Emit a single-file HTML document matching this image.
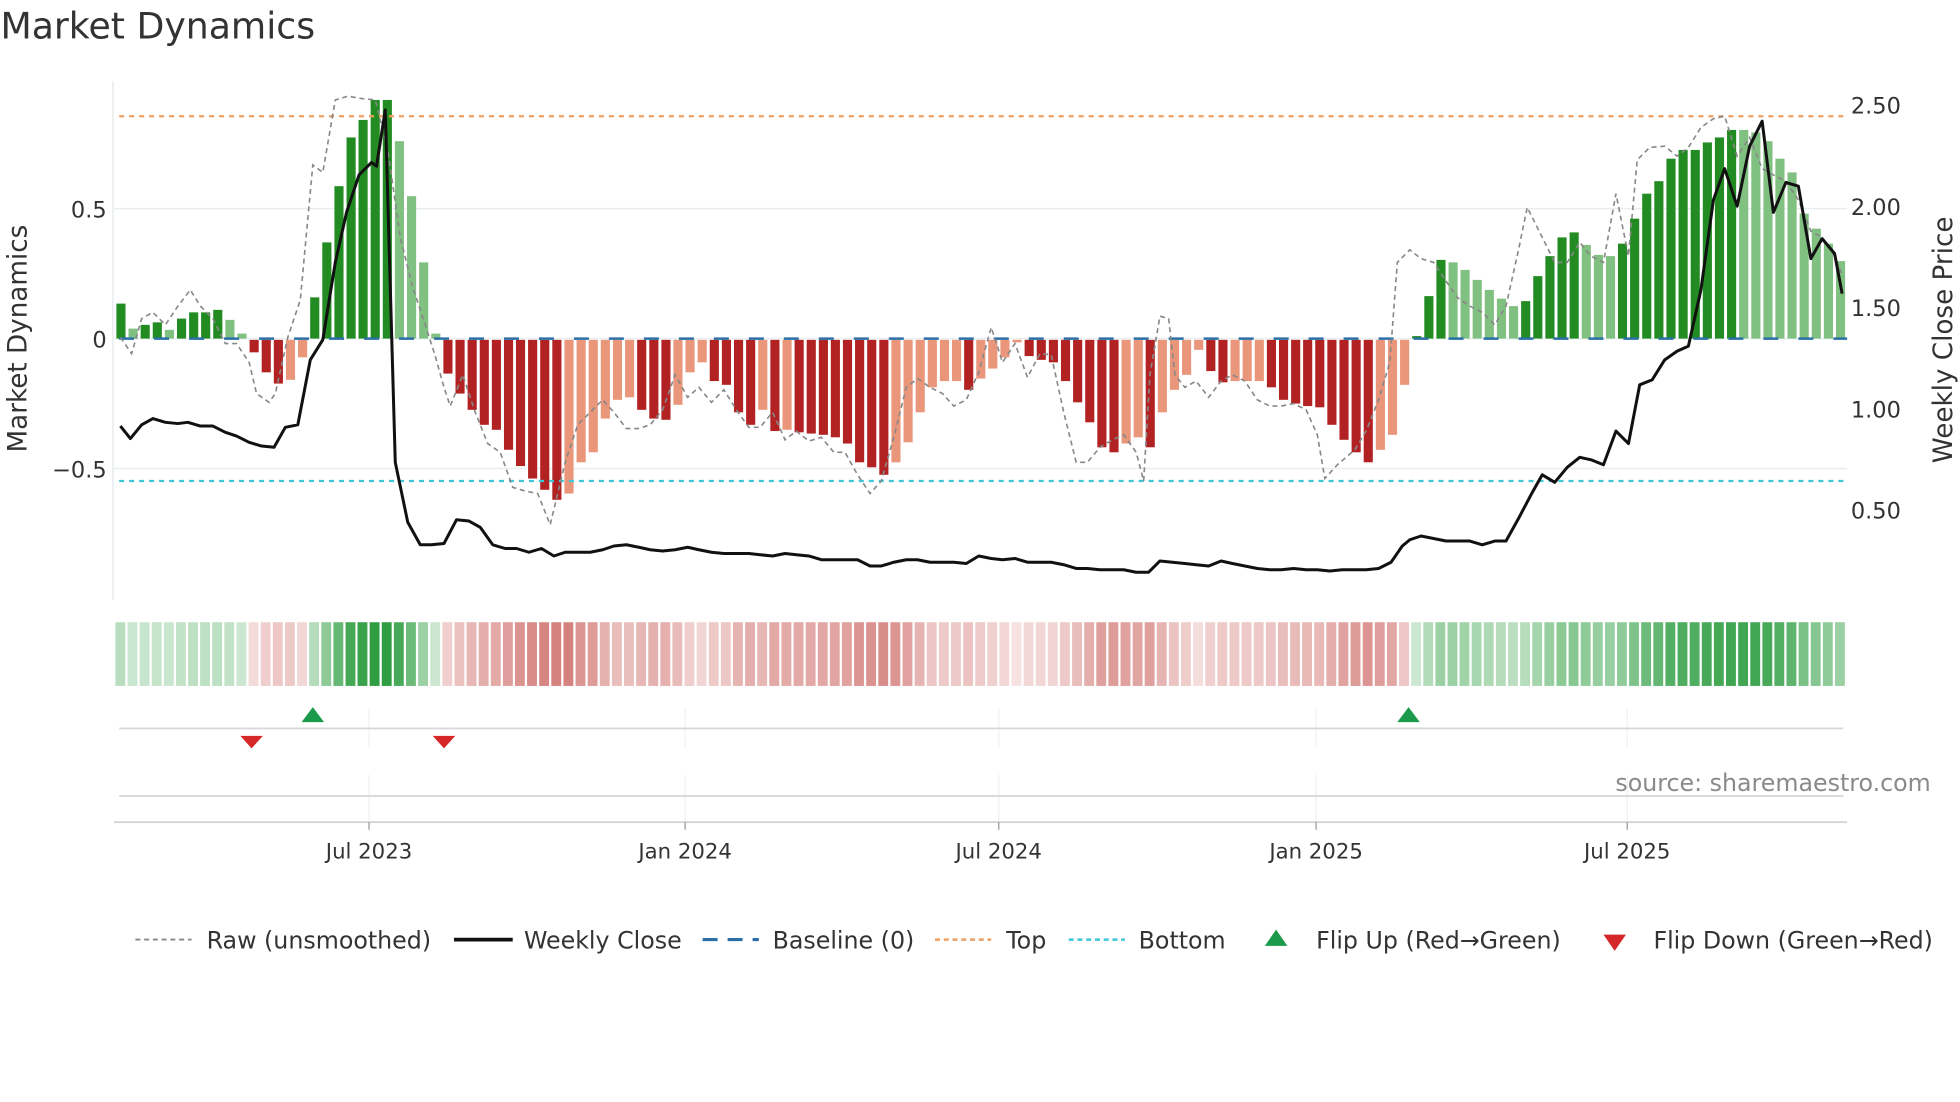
<!DOCTYPE html>
<html><head><meta charset="utf-8"><style>
html,body{margin:0;padding:0;background:#fff;width:1960px;height:1102px;overflow:hidden}
svg{display:block}
text{font-family:"DejaVu Sans","Liberation Sans",sans-serif;fill:#333}
</style></head><body>
<svg id="s" width="1960" height="1102" viewBox="0 0 1568 882" xmlns="http://www.w3.org/2000/svg">
<rect width="1568" height="882" fill="#fff"/>
<text x="0" y="31" font-size="29">Market Dynamics</text>
<g id="g"></g>
<text x="1481" y="91" font-size="18">2.50</text>
<text x="1481" y="172" font-size="18">2.00</text>
<text x="1481" y="253" font-size="18">1.50</text>
<text x="1481" y="334" font-size="18">1.00</text>
<text x="1481" y="415" font-size="18">0.50</text>
<text x="85" y="174" font-size="18" text-anchor="end">0.5</text>
<text x="85" y="278" font-size="18" text-anchor="end">0</text>
<text x="85" y="382" font-size="18" text-anchor="end">−0.5</text>
<text transform="translate(21,271) rotate(-90)" font-size="21" text-anchor="middle">Market Dynamics</text>
<text transform="translate(1562,272) rotate(-90)" font-size="21" text-anchor="middle">Weekly Close Price</text>
<text x="1545" y="633" font-size="19" text-anchor="end" style="fill:#8a8a8a">source: sharemaestro.com</text>
<g font-size="17" text-anchor="middle">
<text x="295" y="687">Jul 2023</text><text x="548" y="687">Jan 2024</text><text x="799" y="687">Jul 2024</text><text x="1053" y="687">Jan 2025</text><text x="1302" y="687">Jul 2025</text>
</g>
<g font-size="19">
<line x1="108" y1="752" x2="153" y2="752" stroke="#888" stroke-width="1.5" stroke-dasharray="4,3"/>
<text x="165" y="759">Raw (unsmoothed)</text>
<line x1="363" y1="752" x2="410" y2="752" stroke="#111" stroke-width="3"/>
<text x="419" y="759">Weekly Close</text>
<line x1="562" y1="752" x2="607" y2="752" stroke="#2a6fa8" stroke-width="2.5" stroke-dasharray="12,8"/>
<text x="618" y="759">Baseline (0)</text>
<line x1="748" y1="752" x2="793" y2="752" stroke="#f0a060" stroke-width="2" stroke-dasharray="4,3"/>
<text x="805" y="759">Top</text>
<line x1="855" y1="752" x2="900" y2="752" stroke="#3cc8d8" stroke-width="2" stroke-dasharray="4,3"/>
<text x="911" y="759">Bottom</text>
<polygon points="1021,744 1030,757 1012,757" fill="#1a9a4a"/>
<text x="1053" y="759">Flip Up (Red→Green)</text>
<polygon points="1283,748 1301,748 1292,761" fill="#d62728"/>
<text x="1323" y="759">Flip Down (Green→Red)</text>
</g>
</svg>
<script>
var g=document.getElementById('g'),h='';
[167,271,375].forEach(function(y){h+='<line x1="91" y1="'+y+'" x2="1478" y2="'+y+'" stroke="#e8eef0" stroke-width="1.2"/>';});
h+='<line x1="90" y1="65" x2="90" y2="480" stroke="#e4e8ea" stroke-width="1"/>';
var B=[[243,1],[263,0],[260,1],[258,1],[264,0],[255,1],[250,1],[250,1],[248,1],[256,0],[267,0],
[282,1],[298,1],[307,1],[304,0],[286,0],
[238,1],[194,1],[149,1],[110,1],[96,1],[80,1],[80,1],[113,0],[157,0],[210,0],[267,0],
[299,1],[315,1],[328,1],[340,1],[344,1],[360,1],[373,1],[383,1],[392,1],[400,1],[395,0],[370,0],[362,0],[335,0],[320,0],[318,0],[328,1],[335,1],[336,1],[324,0],[298,0],[290,0],[305,1],[308,1],
[330,1],[340,1],[328,0],[345,1],[344,0],[346,1],[347,1],[348,1],[350,1],[355,1],[370,1],[374,1],[380,1],[370,0],[354,0],[330,0],[310,0],[305,0],[305,0],[312,1],[303,0],[295,0],[286,0],[274,0],[285,1],[288,1],[290,1],[305,1],[322,1],[338,1],[358,1],[362,1],[355,0],[350,0],[358,1],[330,0],[312,0],[300,0],[280,0],[297,1],[306,1],[305,0],[305,0],[305,0],[310,1],[320,1],[323,1],[325,1],[326,1],[340,1],[352,1],[362,1],[370,1],[360,0],[348,0],[308,0],
[269,1],[237,1],[208,1],[210,0],[216,0],[224,0],[232,0],[239,0],[245,0],[241,1],[221,1],[205,1],[190,1],[186,1],[196,0],[204,0],[205,0],[195,1],[175,1],[155,1],[145,1],[127,1],[120,1],[120,1],[114,1],[110,1],[104,1],[104,0],[106,0],[113,0],[127,0],[138,0],[171,0],[183,0],[195,0],[209,0]];
var n=B.length,x0=92,dx=(1478-x0)/n;
B.forEach(function(b,i){var x=x0+i*dx+0.8,w=dx-2.4,y=b[0],c;
 if(y<=271){c=b[1]?'#228b22':'#80c080';h+='<rect x="'+x.toFixed(1)+'" y="'+y+'" width="'+w.toFixed(1)+'" height="'+(271-y)+'" fill="'+c+'"/>';}
 else{c=b[1]?'#b22222':'#e9967a';h+='<rect x="'+x.toFixed(1)+'" y="272" width="'+w.toFixed(1)+'" height="'+(y-272)+'" fill="'+c+'"/>';}
 var v=(271-y)/208,a;
 if(v>=0){a=0.22+0.75*Math.min(1,v/0.9);c='rgba(40,155,60,'+a.toFixed(2)+')';}
 else{a=0.15+0.55*Math.min(1,-v/0.6);c='rgba(195,75,70,'+a.toFixed(2)+')';}
 h+='<rect x="'+(x0+i*dx).toFixed(1)+'" y="498" width="'+(dx-1.8).toFixed(1)+'" height="51" fill="'+c+'"/>';
});
h+='<line x1="95" y1="271" x2="1478" y2="271" stroke="#2a6fa8" stroke-width="2" stroke-dasharray="12,16"/>';
h+='<line x1="95" y1="93" x2="1478" y2="93" stroke="#f0a060" stroke-width="1.8" stroke-dasharray="4,4"/>';
h+='<line x1="95" y1="385" x2="1478" y2="385" stroke="#3cc8d8" stroke-width="1.8" stroke-dasharray="4,4"/>';
var R="96 270,105 283,113 255,122 250,132 260,142 245,152 232,160 245,170 255,180 275,189 275,199 290,205 315,215 322,220 315,230 270,240 240,250 132,258 138,268 80,278 77,290 79,300 80,310 120,320 190,330 230,340 260,348 285,355 310,360 325,370 300,380 330,390 355,400 362,410 390,420 393,430 395,440 420,452 370,462 340,472 330,482 320,491 330,501 343,511 343,520 340,530 328,540 300,550 318,559 310,569 322,579 312,589 328,599 342,608 342,618 330,628 352,637 345,647 353,657 350,667 362,676 362,686 380,696 395,705 385,715 350,725 310,734 303,744 310,754 315,763 325,773 320,783 298,793 262,802 290,812 275,822 302,832 283,841 284,851 330,861 370,870 370,880 358,890 352,899 348,909 362,915 385,920 300,928 253,935 255,940 300,948 310,957 305,967 318,977 305,986 300,996 305,1006 320,1016 325,1025 325,1035 323,1045 328,1054 348,1060 383,1070 372,1084 360,1093 345,1103 320,1112 290,1118 210,1128 200,1137 207,1147 210,1157 225,1166 238,1176 245,1186 250,1196 260,1205 245,1215 200,1222 166,1234 190,1244 210,1254 210,1264 194,1273 205,1283 210,1293 155,1303 205,1310 128,1320 118,1332 117,1342 125,1351 118,1361 102,1371 95,1380 93,1390 125,1400 110,1410 135,1419 140,1429 145,1439 160,1449 185,1458 190,1468 205,1474 220";
h+='<polyline points="'+R+'" fill="none" stroke="#888" stroke-width="1.3" stroke-dasharray="4,3"/>';
var W="96 341,104 351,113 340,122 335,132 338,142 339,150 338,160 341,170 341,180 346,189 349,199 354,209 357,219 358,228 342,238 340,248 288,258 272,268 210,277 170,287 140,297 130,301 133,308 88,316 370,326 418,336 436,345 436,355 435,365 416,375 417,384 422,394 436,404 439,413 439,423 442,433 439,443 445,452 442,462 442,472 442,482 440,491 437,501 436,511 438,520 440,530 441,540 440,550 438,559 440,569 442,579 443,589 443,599 443,608 444,618 445,628 443,637 444,647 445,657 448,667 448,676 448,686 448,696 453,705 453,715 450,725 448,734 448,744 450,754 450,763 450,773 451,783 445,793 447,802 448,812 447,822 450,832 450,841 450,851 452,861 455,870 455,880 456,890 456,899 456,909 458,919 458,928 449,938 450,948 451,957 452,967 453,977 449,986 451,996 453,1006 455,1016 456,1025 456,1035 455,1045 456,1054 456,1064 457,1074 456,1084 456,1093 456,1103 455,1113 450,1122 437,1128 432,1137 429,1147 431,1157 433,1166 433,1176 433,1186 436,1196 433,1205 433,1215 415,1225 396,1234 380,1244 386,1254 374,1264 366,1273 368,1283 372,1293 345,1303 355,1312 308,1322 304,1332 288,1342 281,1351 277,1361 232,1371 160,1380 135,1390 165,1400 117,1410 97,1419 170,1429 146,1439 149,1449 207,1458 191,1468 203,1474 235";
h+='<polyline points="'+W+'" fill="none" stroke="#111" stroke-width="2.4" stroke-linejoin="round"/>';
[295,548,799,1053,1302].forEach(function(x){h+='<line x1="'+x+'" y1="567" x2="'+x+'" y2="598" stroke="#eef1f3"/><line x1="'+x+'" y1="620" x2="'+x+'" y2="665" stroke="#eef1f3"/>';});
h+='<line x1="95" y1="583" x2="1475" y2="583" stroke="#d6d9db" stroke-width="1.5"/>';
h+='<line x1="95" y1="637" x2="1475" y2="637" stroke="#d6d9db" stroke-width="1.5"/>';
h+='<line x1="91" y1="658" x2="1478" y2="658" stroke="#d0d4d6" stroke-width="1.5"/>';
[295,548,799,1053,1302].forEach(function(x){h+='<line x1="'+x+'" y1="658" x2="'+x+'" y2="664" stroke="#999"/>';});
[250,1127].forEach(function(x){h+='<polygon points="'+x+',566 '+(x+9)+',578 '+(x-9)+',578" fill="#1a9a4a"/>';});
[201,355].forEach(function(x){h+='<polygon points="'+(x-9)+',589 '+(x+9)+',589 '+x+',599" fill="#d62728"/>';});
g.innerHTML=h;
</script>
</body></html>
